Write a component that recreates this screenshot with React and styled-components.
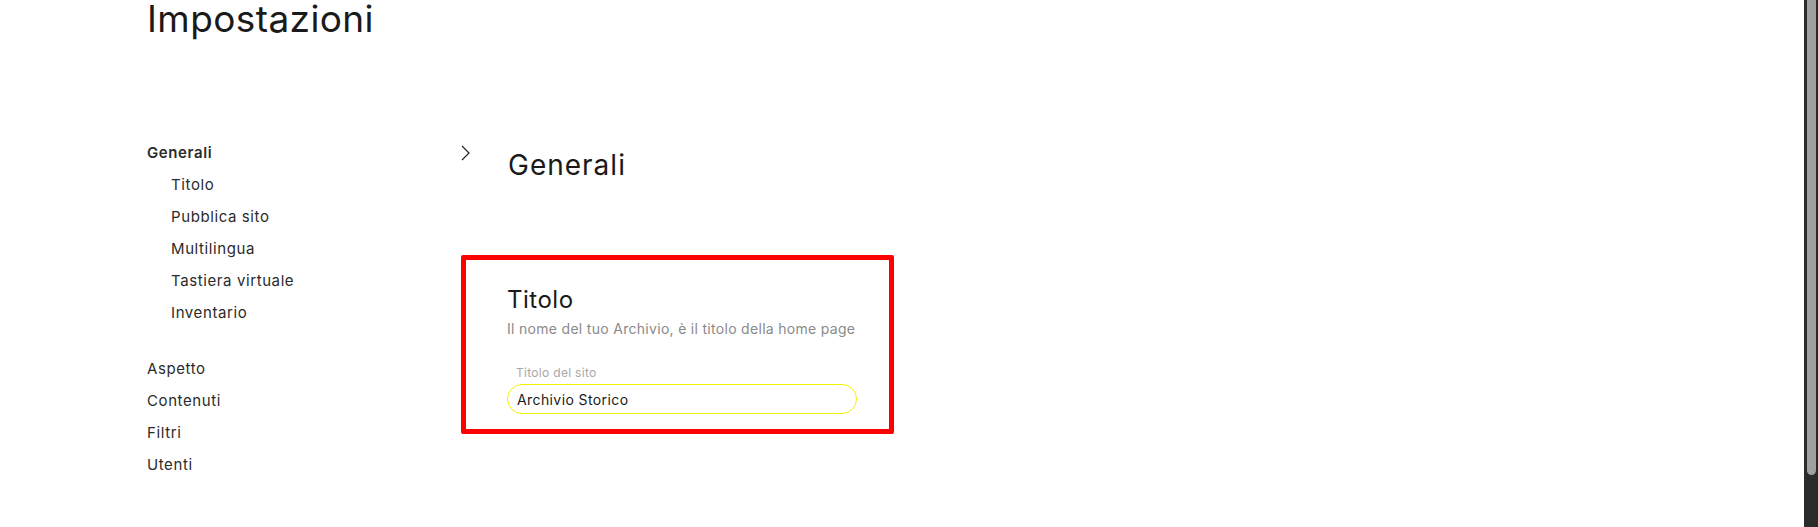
import React from "react";
import styled, { createGlobalStyle } from "styled-components";

const GlobalStyle = createGlobalStyle`
  body {
    margin: 0;
    background: #fff;
    color: #222;
    font-family: Inter, "Open Sans", sans-serif;
  }
`;

const sezioni = [
  {
    nome: "Generali",
    attiva: true,
    voci: ["Titolo", "Pubblica sito", "Multilingua", "Tastiera virtuale", "Inventario"],
  },
  { nome: "Aspetto" },
  { nome: "Contenuti" },
  { nome: "Filtri" },
  { nome: "Utenti" },
];

export default function App() {
  return (
    <Pagina>
      <GlobalStyle />
      <Titolo>Impostazioni</Titolo>
      <Layout>
        <Menu>
          {sezioni.map((s) => (
            <Gruppo key={s.nome} $spazio={!!s.voci}>
              <Voce $attiva={s.attiva}>{s.nome}</Voce>
              {s.voci &&
                s.voci.map((v) => (
                  <Voce key={v} $rientro>
                    {v}
                  </Voce>
                ))}
            </Gruppo>
          ))}
        </Menu>
        <Contenuto>
          <Intestazione>
            <Freccia width="9" height="16" viewBox="0 0 9 16">
              <path d="M1 1 L8 8 L1 15" fill="none" stroke="#222" strokeWidth="1.2" />
            </Freccia>
            <Sezione>Generali</Sezione>
          </Intestazione>
          <Riquadro>
            <SottoTitolo>Titolo</SottoTitolo>
            <Descrizione>Il nome del tuo Archivio, è il titolo della home page</Descrizione>
            <Etichetta htmlFor="titolo-sito">Titolo del sito</Etichetta>
            <Campo id="titolo-sito" defaultValue="Archivio Storico" />
          </Riquadro>
        </Contenuto>
      </Layout>
      <Barra>
        <Cursore />
      </Barra>
    </Pagina>
  );
}

const Pagina = styled.div`
  padding: 0 0 100px 147px;
`;

// dark scrollbar along the right edge of the window
const Barra = styled.div`
  position: fixed;
  top: 0;
  right: 0;
  width: 14px;
  height: 100vh;
  background: #2b2b2b;
`;

const Cursore = styled.div`
  width: 9px;
  height: 475px;
  margin-left: 3px;
  background: #a0a0a0;
  border-radius: 0 0 5px 5px;
`;

const Titolo = styled.h1`
  margin: 0;
  font-size: 37px;
  line-height: 37px;
  font-weight: 400;
  letter-spacing: 0.4px;
  color: #1a1a1a;
`;

const Layout = styled.div`
  display: flex;
  align-items: flex-start;
  margin-top: 100px;
`;

const Menu = styled.nav`
  width: 314px;
  flex-shrink: 0;
`;

const Gruppo = styled.div`
  margin-bottom: ${(p) => (p.$spazio ? "24px" : "0")};
`;

const Voce = styled.div`
  font-size: 15px;
  line-height: 32px;
  letter-spacing: 0.6px;
  color: #2b2b2b;
  font-weight: ${(p) => (p.$attiva ? 600 : 400)};
  padding-left: ${(p) => (p.$rientro ? "24px" : "0")};
`;

const Contenuto = styled.section`
  display: flex;
  flex-direction: column;
`;

const Intestazione = styled.div`
  display: flex;
  align-items: flex-start;
  padding-top: 8px;
`;

const Freccia = styled.svg`
  display: block;
`;

const Sezione = styled.h2`
  margin: 2px 0 0 38px;
  font-size: 28px;
  line-height: 36px;
  font-weight: 400;
  letter-spacing: 1px;
  color: #1a1a1a;
`;

const Riquadro = styled.div`
  box-sizing: border-box;
  width: 433px;
  margin-top: 72px;
  padding: 25px 32px 15px 41px;
  border: 5px solid #ff0000;
  border-radius: 2px;
  display: flex;
  flex-direction: column;
`;

const SottoTitolo = styled.h3`
  margin: 0;
  font-size: 24px;
  line-height: 30px;
  font-weight: 400;
  letter-spacing: 0.5px;
  color: #1a1a1a;
`;

const Descrizione = styled.p`
  margin: 4px 0 0;
  font-size: 14px;
  line-height: 20px;
  letter-spacing: 0.3px;
  white-space: nowrap;
  color: #8a8a8a;
`;

const Etichetta = styled.label`
  margin-top: 26px;
  padding-left: 9px;
  font-size: 12px;
  line-height: 16px;
  letter-spacing: 0.3px;
  color: #a8a8a8;
`;

const Campo = styled.input`
  box-sizing: border-box;
  width: 350px;
  height: 30px;
  margin-top: 3px;
  padding: 0 9px;
  border: 1px solid #f2f200;
  border-radius: 15px;
  outline: none;
  font-family: inherit;
  font-size: 14px;
  letter-spacing: 0.4px;
  color: #1a1a1a;
  background: #fff;
`;
